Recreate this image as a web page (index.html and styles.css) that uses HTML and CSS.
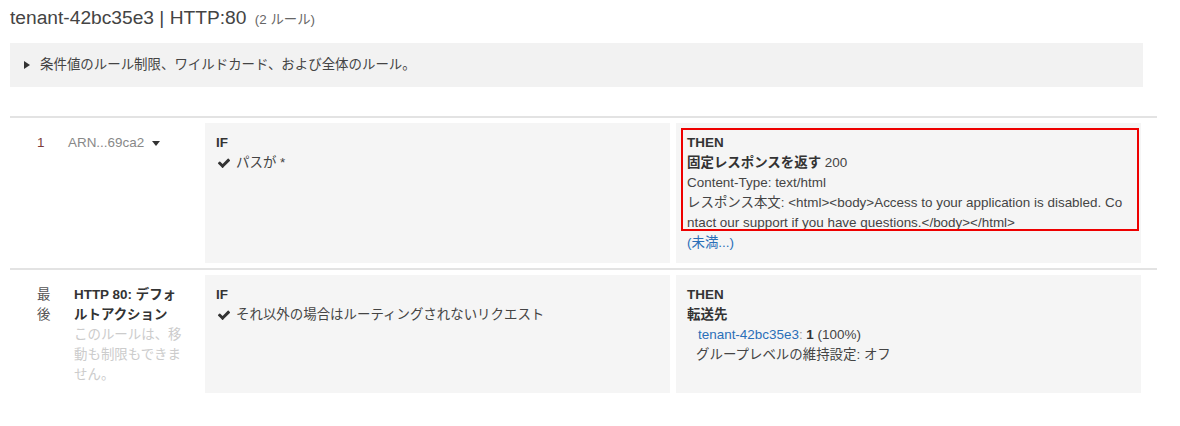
FILE: index.html
```html
<!DOCTYPE html>
<html lang="ja">
<head>
<meta charset="utf-8">
<link rel="stylesheet" href="styles.css">
</head>
<body>
<div class="page">
  <h1 class="title">tenant-42bc35e3 | HTTP:80 <span class="count">(2 ルール)</span></h1>
  <div class="info">
    <span class="tri-right"></span>
    <span>条件値のルール制限、ワイルドカード、および全体のルール。</span>
  </div>

  <div class="rule">
    <div class="meta meta-1">
      <div class="num num-1">1</div>
      <div class="arn">ARN...69ca2 <span class="caret"></span></div>
    </div>
    <div class="cell">
      <div class="label">IF</div>
      <div class="cond"><svg class="check" viewBox="0 0 1792 1792"><path d="M1671 566q0 40-28 68l-724 724-136 136q-28 28-68 28t-68-28l-136-136-362-362q-28-28-28-68t28-68l136-136q28-28 68-28t68 28l294 295 656-657q28-28 68-28t68 28l136 136q28 28 28 68z"/></svg>パスが *</div>
    </div>
    <div class="cell cell-then">
      <div class="highlight"></div>
      <div class="label">THEN</div>
      <div><b>固定レスポンスを返す</b> 200</div>
      <div>Content-Type: text/html</div>
      <div class="body-text">レスポンス本文: &lt;html&gt;&lt;body&gt;Access to your application is disabled. Contact our support if you have questions.&lt;/body&gt;&lt;/html&gt;</div>
      <div><a class="link" href="#">(未満...)</a></div>
    </div>
  </div>

  <div class="rule">
    <div class="meta meta-2">
      <div class="num num-2">最後</div>
      <div class="default">
        <div class="default-name">HTTP 80: デフォルトアクション</div>
        <div class="note">このルールは、移動も制限もできません。</div>
      </div>
    </div>
    <div class="cell">
      <div class="label">IF</div>
      <div class="cond"><svg class="check" viewBox="0 0 1792 1792"><path d="M1671 566q0 40-28 68l-724 724-136 136q-28 28-68 28t-68-28l-136-136-362-362q-28-28-28-68t28-68l136-136q28-28 68-28t68 28l294 295 656-657q28-28 68-28t68 28l136 136q28 28 28 68z"/></svg>それ以外の場合はルーティングされないリクエスト</div>
    </div>
    <div class="cell">
      <div class="label">THEN</div>
      <div><b>転送先</b></div>
      <div class="indent"><a class="link" href="#">tenant-42bc35e3</a><span class="muted">:</span> <b>1</b> (100%)</div>
      <div class="indent2">グループレベルの維持設定: オフ</div>
    </div>
  </div>
</div>
</body>
</html>
```

FILE: styles.css
```css
html, body {
  margin: 0;
  padding: 0;
  background: #ffffff;
}

body {
  font-family: "Liberation Sans", Arial, "Noto Sans CJK JP", sans-serif;
  font-size: 13.44px;
  line-height: 20px;
  color: #444444;
}

.page {
  padding: 0 23px 0 10px;
  width: 1147px;
}

.title {
  margin: 6px 0 13px 0;
  height: 24px;
  font-size: 19.2px;
  line-height: 24px;
  font-weight: normal;
  color: #444444;
}

.count {
  font-size: 13.4px;
  line-height: 1;
  color: #666666;
  margin-left: 3px;
}

.info {
  width: 1133px;
  height: 44px;
  box-sizing: border-box;
  background: #f2f2f2;
  padding: 12px 14px;
  display: flex;
  align-items: center;
  gap: 10px;
  margin-bottom: 29px;
}

.tri-right {
  width: 0;
  height: 0;
  border-top: 4px solid transparent;
  border-bottom: 4px solid transparent;
  border-left: 6px solid #333333;
}

.rule {
  border-top: 2px solid #e3e3e3;
  padding: 5px 16px 5px 0;
  display: grid;
  grid-template-columns: 189px 465px 465px;
  column-gap: 6px;
}

.meta {
  display: flex;
  padding: 10px 0 6px 27px;
}

.meta-2 {
  padding-bottom: 8px;
}

.num-1 {
  width: 31px;
  color: #7d3c3c;
}

.num-2 {
  width: 14px;
  margin-right: 23px;
  color: #555555;
}

.arn {
  color: #888888;
  display: flex;
  align-items: center;
  gap: 8px;
  height: 20px;
}

.caret {
  width: 0;
  height: 0;
  border-left: 4.5px solid transparent;
  border-right: 4.5px solid transparent;
  border-top: 5px solid #333333;
}

.default {
  width: 110px;
}

.default-name {
  font-weight: bold;
  color: #333333;
}

.note {
  color: #cccccc;
}

.cell {
  background: #f5f5f5;
  padding: 10px 11px;
  position: relative;
}

.label {
  font-weight: bold;
  color: #333333;
}

.cell b {
  color: #333333;
}

.cond {
  display: flex;
  align-items: center;
}

.check {
  width: 14px;
  height: 14px;
  fill: #333333;
  margin: 0 5px 0 1px;
}

.body-text {
  word-break: break-all;
  padding-right: 6px;
}

.link {
  color: #2a6fb8;
  text-decoration: none;
}

.muted {
  color: #999999;
}

.indent {
  padding-left: 11px;
}

.indent2 {
  padding-left: 9px;
}

.highlight {
  position: absolute;
  left: 5px;
  top: 5px;
  width: 458px;
  height: 103px;
  box-sizing: border-box;
  border: 2px solid #ee0000;
  pointer-events: none;
}
```
